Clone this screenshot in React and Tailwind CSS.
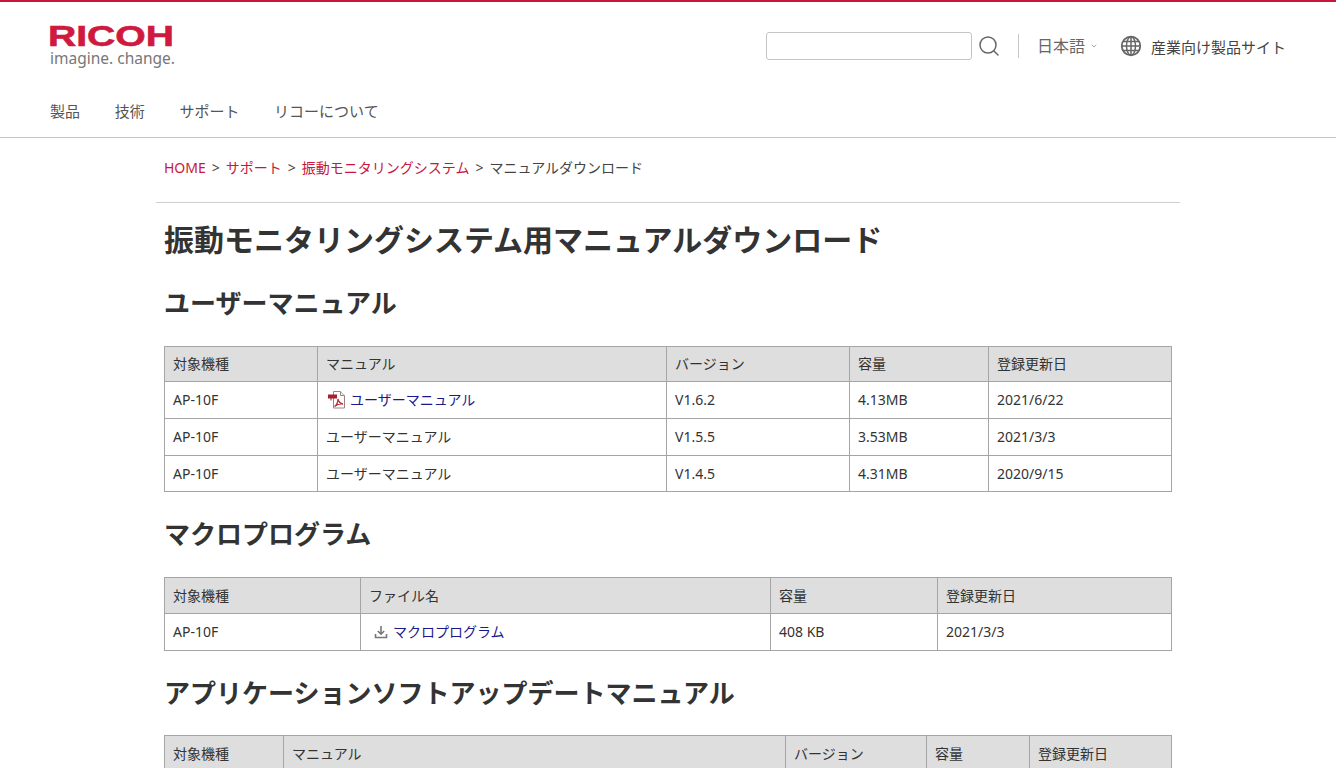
import { Search, ChevronDown } from 'lucide-react';

const font = '[font-family:"Noto_Sans","Noto_Sans_CJK_JP",sans-serif]';

function PdfIcon() {
  return (
    <svg width="18" height="18" viewBox="0 0 18 18" className="shrink-0">
      <path d="M5.500.5h7l4 4v12.500h-11z" fill="#fff" stroke="#a08080" strokeWidth="1" />
      <path d="M12.500.5v4h4" fill="#eee" stroke="#a08080" strokeWidth="1" />
      <path d="M0 3.500h9v4h-5.500v2h-1v-2h-2.500z" fill="#a8202a" />
      <path d="M6.500 15.500c2-1.500 3.500-4.500 3.500-7.500.5 2.500 2.500 4.500 5 5-3-.5-6 .5-8.500 2.500z" fill="none" stroke="#b5303a" strokeWidth="1.300" />
    </svg>
  );
}

function GlobeIcon() {
  return (
    <svg width="22" height="22" viewBox="0 0 22 22" fill="none" stroke="#666" strokeWidth="1.500" className="ml-[22px] shrink-0">
      <circle cx="11" cy="11" r="9.250" strokeWidth="1.800" />
      <ellipse cx="11" cy="11" rx="4.500" ry="9.250" />
      <path d="M11 1.750v18.500M2 11h18M3.200 6.500h15.600M3.200 15.500h15.600" />
    </svg>
  );
}

function DownloadIcon() {
  return (
    <svg width="14" height="14" viewBox="0 0 14 14" fill="none" stroke="#777" strokeWidth="1.600" className="shrink-0">
      <path d="M7 1v8M3.800 6l3.200 3.200 3.200-3.200" />
      <path d="M1.500 9v3.500h11v-3.500" />
    </svg>
  );
}

function Cell({ children, head, className = '' }) {
  const Tag = head ? 'th' : 'td';
  return (
    <Tag className={`border border-[#a5a5a5] px-2 text-left text-sm font-normal ${head ? 'bg-[#dedede]' : ''} ${className}`}>
      {children}
    </Tag>
  );
}

function DataTable({ widths, head, rows, tight }) {
  return (
    <table className="w-[1007px] table-fixed border-collapse text-[#333]">
      <colgroup>
        {widths.map((w) => (
          <col key={w} style={{ width: w }} />
        ))}
      </colgroup>
      <thead>
        <tr className={tight ? 'h-[35px]' : 'h-[36px]'}>
          {head.map((h) => (
            <Cell head key={h}>{h}</Cell>
          ))}
        </tr>
      </thead>
      <tbody>
        {rows.map((row, i) => (
          <tr key={i} className={tight && i === rows.length - 1 ? 'h-[36px]' : 'h-[37px]'}>
            {row.map((c, j) => (
              <Cell key={j}>{c}</Cell>
            ))}
          </tr>
        ))}
      </tbody>
    </table>
  );
}

export default function App() {
  return (
    <div className={`h-[768px] overflow-hidden bg-white text-[#333] ${font}`}>
      <header className="h-[138px] border-t-2 border-b border-t-[#c8173c] border-b-[#c4c4c4]">
        <div className="flex h-[99px] items-start justify-between px-[50px]">
          <div className="mt-[22px] w-[128px]">
            <svg width="126" height="24" viewBox="0 0 126 24" className="ml-[-2px] block overflow-visible">
              <text x="0" y="21.500" textLength="126" lengthAdjust="spacingAndGlyphs" fontFamily="Liberation Sans" fontWeight="700" fontSize="29" fill="#cf1a3e" stroke="#cf1a3e" strokeWidth="0.600">RICOH</text>
            </svg>
            <div className="text-[15.5px] leading-[20px] text-[#777]">imagine. change.</div>
          </div>
          <div className="mt-[30px] flex items-center">
            <input className="h-[28px] w-[206px] rounded-[3px] border border-[#c4c4c4] bg-white" />
            <Search size={24} strokeWidth={1.500} className="ml-[5px] text-[#666]" />
            <div className="mr-[18px] ml-[17px] h-[24px] w-px bg-[#c8c8c8]" />
            <span className="text-base text-[#666]">日本語</span>
            <ChevronDown size={8} className="mt-[-1px] ml-[5px] text-[#777]" />
            <GlobeIcon />
            <span className="mt-[2px] ml-[9px] text-[15px] text-[#444]">産業向け製品サイト</span>
          </div>
        </div>
        <nav className="flex gap-[34.700px] pl-[50px] text-[15px] leading-[20px] text-[#555]">
          <span>製品</span>
          <span>技術</span>
          <span>サポート</span>
          <span>リコーについて</span>
        </nav>
      </header>

      <main className="mx-auto w-[1024px]">
        <div className="flex h-[65px] items-start gap-[6px] border-b border-[#cfcfcf] px-2 pt-[19px] text-sm leading-[22px] text-[#444]">
          <a className="text-[#c8173c]">HOME</a>
          <span>&gt;</span>
          <a className="text-[#c8173c]">サポート</a>
          <span>&gt;</span>
          <a className="text-[#c8173c]">振動モニタリングシステム</a>
          <span>&gt;</span>
          <span>マニュアルダウンロード</span>
        </div>
        <div className="px-2">
          <h1 className="mt-[15px] text-[30px] leading-[44px] font-bold">振動モニタリングシステム用マニュアルダウンロード</h1>
          <h2 className="mt-[22px] text-[26px] leading-[38px] font-bold">ユーザーマニュアル</h2>
          <div className="mt-[24px]">
            <DataTable
              tight
              widths={[153, 349, 183, 139, 183]}
              head={['対象機種', 'マニュアル', 'バージョン', '容量', '登録更新日']}
              rows={[
                ['AP-10F', <a className="flex items-center gap-[4px] pl-[2px] text-[#1a1a8c]"><PdfIcon />ユーザーマニュアル</a>, 'V1.6.2', '4.13MB', '2021/6/22'],
                ['AP-10F', 'ユーザーマニュアル', 'V1.5.5', '3.53MB', '2021/3/3'],
                ['AP-10F', 'ユーザーマニュアル', 'V1.4.5', '4.31MB', '2020/9/15'],
              ]}
            />
          </div>
          <h2 className="mt-[23px] text-[26px] leading-[38px] font-bold">マクロプログラム</h2>
          <div className="mt-[24px]">
            <DataTable
              widths={[196, 410, 167, 234]}
              head={['対象機種', 'ファイル名', '容量', '登録更新日']}
              rows={[
                ['AP-10F', <a className="flex items-center gap-[5px] pl-[5px] text-[#1a1a8c]"><DownloadIcon />マクロプログラム</a>, '408 KB', '2021/3/3'],
              ]}
            />
          </div>
          <h2 className="mt-[23px] text-[26px] leading-[38px] font-bold">アプリケーションソフトアップデートマニュアル</h2>
          <div className="mt-[23px]">
            <DataTable
              widths={[119, 502, 141, 103, 142]}
              head={['対象機種', 'マニュアル', 'バージョン', '容量', '登録更新日']}
              rows={[]}
            />
          </div>
        </div>
      </main>
    </div>
  );
}
